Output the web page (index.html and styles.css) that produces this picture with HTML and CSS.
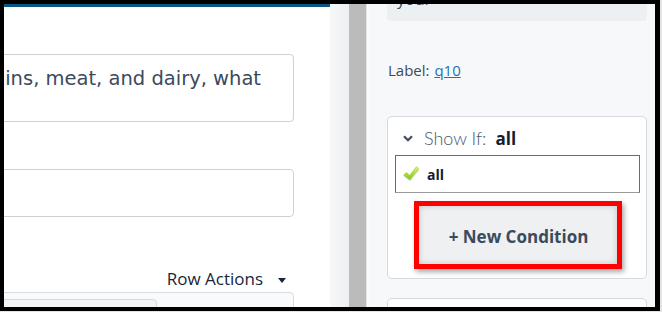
FILE: index.html
```html
<!DOCTYPE html>
<html lang="en">
<head>
    <meta charset="UTF-8">
    <title>Question editor</title>
    <link rel="stylesheet" href="styles.css">
</head>
<body>
    <div class="frame">
        <div class="editor">
            <div class="editor-body">
                <div class="question-box">
                    <span class="question-text">Of all the grains, meat, and dairy, what</span>
                </div>
                <div class="answer-box"></div>
                <div class="row-actions">
                    Row Actions <span class="caret"></span>
                </div>
                <div class="rows">
                    <div class="row-card"></div>
                </div>
            </div>
        </div>
        <div class="splitter">
            <div class="splitter-gutter"></div>
            <div class="splitter-handle"></div>
            <div class="splitter-edge"></div>
        </div>
        <div class="sidebar">
            <div class="preview"><span class="preview-text">your</span></div>
            <div class="label-line">
                Label: <a href="#" class="label-link">q10</a>
            </div>
            <div class="card">
                <div class="card-title">
                    <svg class="chevron" width="10" height="7" viewBox="0 0 10 7">
                        <path d="M1 1.2 L5 5.2 L9 1.2" fill="none" stroke="#3d4b5c" stroke-width="2.2"/>
                    </svg>
                    <span class="show-if">Show If:</span>
                    <span class="show-if-value">all</span>
                </div>
                <div class="condition">
                    <svg class="check" width="16" height="16" viewBox="0 0 16 16">
                        <defs>
                            <linearGradient id="checkfill" x1="0" y1="0" x2="0" y2="1">
                                <stop offset="0" stop-color="#e2f76a"/>
                                <stop offset="1" stop-color="#7cc614"/>
                            </linearGradient>
                        </defs>
                        <path d="M0.5 9.5 L3.8 7 L6.5 10 L13.3 1.2 L15.8 3 L6.9 14.2 Z" fill="#000" opacity="0.12" transform="translate(0.3 1.3)"/>
                        <path d="M0.5 9 L3.8 6.5 L6.5 9.5 L13.3 0.8 L15.8 2.6 L6.9 13.8 Z" fill="url(#checkfill)" stroke="#8cbc20" stroke-width="0.5"/>
                    </svg>
                    <span class="condition-name">all</span>
                </div>
                <div class="highlight">
                    <button class="new-condition">+ New Condition</button>
                </div>
            </div>
            <div class="card card-next"></div>
        </div>
    </div>
</body>
</html>
```

FILE: styles.css
```css
body {
    margin: 0;
    background: #e4e4e4;
    width: 662px;
    height: 312px;
    overflow: hidden;
}
.frame {
    width: 660px;
    height: 311px;
    box-sizing: border-box;
    border: 4px solid #000;
    border-right-width: 5px;
    display: flex;
    background: #fff;
    overflow: hidden;
}
.editor {
    width: 326px;
    border-top: 3px solid #0d5385;
    overflow: hidden;
    background: #fff;
}
.editor-body {
    padding-right: 36px;
    margin-left: -20px;
}
.question-box {
    margin-top: 47px;
    height: 68px;
    box-sizing: border-box;
    border: 1px solid #cdd2d7;
    border-radius: 4px;
    display: flex;
    justify-content: flex-end;
    align-items: flex-start;
    padding: 12px 32px 0 0;
    overflow: hidden;
}
.question-text {
    white-space: nowrap;
    flex-shrink: 0;
    font-family: "DejaVu Sans", Verdana, sans-serif;
    font-size: 19.5px;
    line-height: 24px;
    color: #3a4a5c;
}
.answer-box {
    margin-top: 47px;
    height: 48px;
    box-sizing: border-box;
    border: 1px solid #cdd2d7;
    border-radius: 4px;
}
.row-actions {
    margin-top: 51px;
    display: flex;
    justify-content: flex-end;
    align-items: center;
    gap: 15px;
    padding-right: 8px;
    font-family: "Open Sans", sans-serif;
    font-size: 17px;
    line-height: 22px;
    color: #17263a;
}
.caret {
    width: 0;
    height: 0;
    border-left: 4px solid transparent;
    border-right: 4px solid transparent;
    border-top: 5px solid #17263a;
    margin-top: 2px;
}
.rows {
    margin-top: 2px;
    height: 40px;
    border: 1px solid #d9dde1;
    border-radius: 4px;
    background: #f9fafb;
    padding-top: 6px;
}
.row-card {
    width: 170px;
    height: 40px;
    border: 1px solid #d7dbdf;
    border-radius: 4px;
    background: #f3f4f6;
}
.splitter {
    width: 39px;
    display: flex;
}
.splitter-gutter {
    width: 19px;
    background: linear-gradient(to right, #f6f7f8, #eef0f2);
}
.splitter-handle {
    width: 17px;
    background: #bbbbbb;
}
.splitter-edge {
    width: 3px;
    background: #fbfbfc;
    border-left: 1px solid #e6e6e6;
    box-sizing: border-box;
}
.sidebar {
    flex: 1;
    background: #f7f8fa;
    padding: 0 8px 0 18px;
    font-family: "Open Sans", sans-serif;
    color: #3d4b5c;
    overflow: hidden;
}
.preview {
    height: 17px;
    background: #edf0f3;
    border-radius: 0 0 4px 4px;
    overflow: hidden;
    padding-left: 10px;
    font-size: 16px;
    line-height: 20px;
}
.preview-text {
    display: block;
    margin-top: -15px;
}
.label-line {
    margin-top: 39px;
    font-size: 15px;
    line-height: 20px;
    padding-left: 1px;
}
.label-link {
    color: #1d72b8;
    margin-left: 1px;
}
.card {
    margin-top: 36px;
    height: 163px;
    box-sizing: border-box;
    border: 1px solid #d5d9de;
    border-radius: 5px;
    background: #fff;
    padding: 9px 6px 0 7px;
}
.card-title {
    display: flex;
    align-items: center;
    height: 24px;
    padding-left: 8px;
}
.chevron {
    margin-right: 11px;
}
.show-if {
    font-family: Lato, sans-serif;
    font-size: 18px;
    font-weight: 300;
    color: #4b5968;
}
.show-if-value {
    margin-left: 9px;
    font-size: 17px;
    font-weight: 700;
    color: #131d2c;
}
.condition {
    margin-top: 5px;
    height: 38px;
    box-sizing: border-box;
    border: 1px solid #6b6b6b;
    border-bottom-color: #9a9a9a;
    display: flex;
    align-items: center;
    padding-left: 7px;
}
.check {
    margin-right: 8px;
}
.condition-name {
    font-size: 14px;
    font-weight: 700;
    color: #131d2c;
}
.highlight {
    margin: 8px auto 0;
    width: 208px;
    height: 68px;
    box-sizing: border-box;
    border: 5px solid #ff0000;
    box-shadow: 2px 3px 5px rgba(0, 0, 0, 0.35);
}
.new-condition {
    width: 100%;
    height: 100%;
    border: none;
    background: #eef0f2;
    box-shadow: inset 0 0 6px rgba(0, 0, 0, 0.18);
    font-family: "Open Sans", sans-serif;
    font-size: 17px;
    font-weight: 700;
    color: #3b4a5c;
    padding: 2px 0 0 2px;
}
.card-next {
    margin-top: 19px;
    height: 40px;
}
```
